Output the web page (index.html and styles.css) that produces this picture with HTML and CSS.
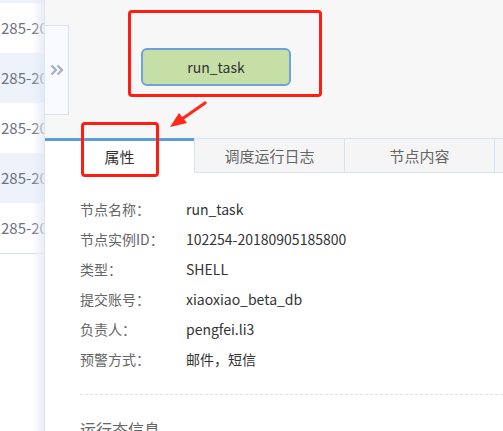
FILE: index.html
```html
<!DOCTYPE html>
<html lang="zh">
<head>
<meta charset="utf-8">
<link rel="stylesheet" href="styles.css">
</head>
<body>
<div class="page">
  <aside class="list">
    <div class="row alt top"></div>
    <div class="row"><span class="cell">285-20180905</span></div>
    <div class="row alt"><span class="cell">285-20180905</span></div>
    <div class="row"><span class="cell">285-20180905</span></div>
    <div class="row alt"><span class="cell">285-20180905</span></div>
    <div class="row last"><span class="cell">285-20180905</span></div>
  </aside>
  <main class="main">
    <section class="canvas">
      <div class="collapse">
        <svg width="14" height="12" viewBox="0 0 14 12">
          <path d="M1.5 1.5 L6 6 L1.5 10.5 M7.5 1.5 L12 6 L7.5 10.5" stroke="#a3afc2" stroke-width="2.2" fill="none"/>
        </svg>
      </div>
      <div class="node">run_task</div>
      <div class="mark mark-node"></div>
      <div class="mark mark-tab"></div>
      <svg class="arrow" width="40" height="30" viewBox="0 0 40 30">
        <path d="M37 2 L14 18" stroke="#ff2a1a" stroke-width="3.2" stroke-linecap="round" fill="none"/>
        <path d="M2 26 L11 12 L19 22 Z" fill="#ff2a1a"/>
      </svg>
    </section>
    <nav class="tabs">
      <div class="tab active">属性</div>
      <div class="tab">调度运行日志</div>
      <div class="tab">节点内容</div>
      <div class="tab"></div>
    </nav>
    <section class="props">
      <div class="prop"><span class="k">节点名称：</span><span class="v">run_task</span></div>
      <div class="prop"><span class="k">节点实例ID：</span><span class="v">102254-20180905185800</span></div>
      <div class="prop"><span class="k">类型：</span><span class="v">SHELL</span></div>
      <div class="prop"><span class="k">提交账号：</span><span class="v">xiaoxiao_beta_db</span></div>
      <div class="prop"><span class="k">负责人：</span><span class="v">pengfei.li3</span></div>
      <div class="prop"><span class="k">预警方式：</span><span class="v">邮件，短信</span></div>
      <div class="sep"></div>
      <div class="section-title">运行态信息</div>
    </section>
  </main>
</div>
</body>
</html>
```

FILE: styles.css
```css
html, body {
  margin: 0;
  padding: 0;
  height: 100%;
  overflow: hidden;
  background: #ffffff;
  font-family: "Noto Sans CJK SC", "Noto Sans", sans-serif;
  font-size: 14px;
}
.page {
  display: flex;
  height: 431px;
  width: 503px;
  overflow: hidden;
}
.list {
  position: relative;
  width: 44px;
  flex: none;
  border-right: 1px solid #dfe5f0;
  background: #ffffff;
  overflow: hidden;
}
.list::after {
  content: "";
  position: absolute;
  top: 0;
  right: 0;
  bottom: 0;
  width: 12px;
  background: linear-gradient(to right, rgba(225,232,245,0), rgba(225,232,245,0.75));
}
.row {
  height: 50px;
  line-height: 50px;
  padding-left: 1px;
  color: #6b7280;
  white-space: nowrap;
  overflow: hidden;
  font-size: 15px;
  background: #ffffff;
}
.cell {
  display: inline-block;
  width: 43px;
  overflow: hidden;
  vertical-align: top;
}
.row.alt { background: #eef2fa; }
.row.top { height: 3px; }
.row.last { border-bottom: 1px solid #d8e0ee; }
.main {
  flex: 1;
  display: flex;
  flex-direction: column;
  min-width: 0;
}
.canvas {
  position: relative;
  height: 138px;
  flex: none;
  background: #f7f7f7;
}
.collapse {
  position: absolute;
  left: 0;
  top: 25px;
  width: 23px;
  height: 88px;
  border: 1px solid #dbe2ee;
  border-left: none;
  background: #f8faff;
  display: flex;
  align-items: center;
  justify-content: center;
}
.node {
  position: absolute;
  left: 96px;
  top: 48px;
  width: 146px;
  height: 34px;
  border: 2px solid #6fa2dc;
  border-radius: 6px;
  background: #c6dfa6;
  color: #333333;
  text-align: center;
  line-height: 34px;
  font-size: 14px;
}
.mark {
  position: absolute;
  border: 3px solid #ff1d12;
  border-radius: 4px;
  z-index: 5;
}
.mark-node {
  left: 83px;
  top: 10px;
  width: 188px;
  height: 81px;
}
.mark-tab {
  left: 36px;
  top: 122px;
  width: 72px;
  height: 49px;
}
.arrow {
  position: absolute;
  left: 123px;
  top: 101px;
  z-index: 5;
}
.tabs {
  display: flex;
  height: 35px;
  flex: none;
}
.tab {
  width: 150px;
  flex: none;
  box-sizing: border-box;
  height: 35px;
  line-height: 33px;
  text-align: center;
  background: #f5f5f5;
  border: 1px solid #d9e2f0;
  border-right: none;
  color: #666666;
  font-size: 15px;
}
.tab.active {
  width: 149px;
  background: #ffffff;
  border: none;
  border-top: 3px solid #5e9bd8;
  line-height: 32px;
  color: #333333;
}
.props {
  padding: 21px 0 0 35px;
  background: #ffffff;
}
.prop {
  display: flex;
  height: 30px;
  line-height: 30px;
}
.k {
  width: 106px;
  flex: none;
  color: #666666;
}
.v {
  color: #333333;
}
.sep {
  margin-top: 20px;
  border-top: 1px dashed #dbe2ec;
}
.section-title {
  margin-top: 22px;
  color: #666666;
  font-size: 16px;
}
```
